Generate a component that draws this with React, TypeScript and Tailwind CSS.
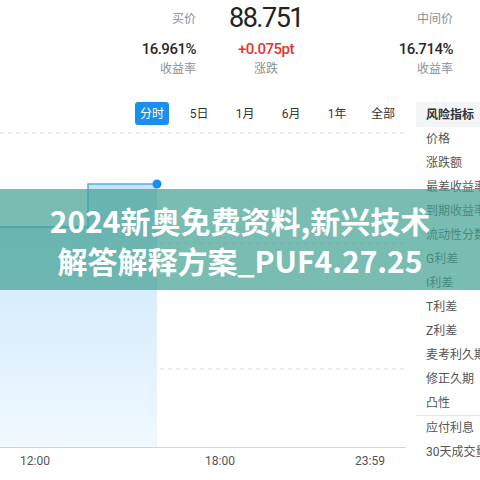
const items = [
  '价格',
  '涨跌额',
  '最差收益率',
  '到期收益率',
  '流动性分数',
  'G利差',
  'I利差',
  'T利差',
  'Z利差',
  '麦考利久期',
  '修正久期',
  '凸性',
];

const tabs = ['分时', '5日', '1月', '6月', '1年', '全部'];

function Chart() {
  return (
    <svg width="406" height="316" viewBox="0 0 406 316" className="block">
      <defs>
        <linearGradient id="fill" x1="0" y1="0" x2="0" y2="1">
          <stop offset="0" stopColor="#c6e4fb" />
          <stop offset="1" stopColor="#f0f9ff" />
        </linearGradient>
      </defs>
      {/* y offset: svg top = page y 132 */}
      <line x1="0" y1="1" x2="406" y2="1" stroke="#d8dde3" strokeDasharray="4 4" />
      <line x1="0" y1="111" x2="406" y2="111" stroke="#d8dde3" strokeDasharray="4 4" />
      <line x1="0" y1="237" x2="406" y2="237" stroke="#dde2e7" strokeDasharray="4 4" />
      <path d="M0 95 H88 V52 H157 V315 H0 Z" fill="url(#fill)" />
      <path d="M0 95 H88 V52 H157" fill="none" stroke="#5aa9ec" strokeWidth="1.5" />
      <circle cx="157" cy="52" r="4.5" fill="#1b8ef2" />
      <line x1="0" y1="315.5" x2="406" y2="315.5" stroke="#cfd4d9" />
    </svg>
  );
}

export default function App() {
  return (
    <div
      className="relative w-[480px] h-[480px] overflow-hidden bg-white"
      style={{ fontFamily: 'Roboto, "Noto Sans CJK SC", sans-serif' }}
    >
      {/* header quotes */}
      <div className="flex h-[100px] pt-[4px]">
        <div className="w-[196px] flex flex-col items-end">
          <div className="h-[28px] flex items-end pb-[4px] text-[12px] text-[#8a8f96]">买价</div>
          <div className="mt-[7px] text-[15px] font-medium text-[#2a2a2a] tracking-[-0.5px] leading-[20px]">16.961%</div>
          <div className="mt-[1px] text-[12px] text-[#8a8f96] leading-[18px]">收益率</div>
        </div>
        <div className="w-[140px] flex flex-col items-center">
          <div className="h-[28px] text-[27px] leading-[28px] text-[#222] tracking-[-1.5px]">88.751</div>
          <div className="mt-[7px] text-[15px] font-medium text-[#e8332f] tracking-[-0.5px] leading-[20px]">+0.075pt</div>
          <div className="mt-[1px] text-[12px] text-[#8a8f96] leading-[18px]">涨跌</div>
        </div>
        <div className="w-[117px] flex flex-col items-end">
          <div className="h-[28px] flex items-end pb-[4px] text-[12px] text-[#8a8f96]">中间价</div>
          <div className="mt-[7px] text-[15px] font-medium text-[#2a2a2a] tracking-[-0.5px] leading-[20px]">16.714%</div>
          <div className="mt-[1px] text-[12px] text-[#8a8f96] leading-[18px]">收益率</div>
        </div>
      </div>

      <div className="flex">
        {/* chart column */}
        <div className="w-[406px] flex flex-col">
          <div className="h-[32px] flex items-start pt-[2px] pl-[135px] text-[12px] text-[#333]">
            {tabs.map((t, i) =>
              i === 0 ? (
                <div key={t} className="w-[35px] h-[23px] mr-[7px] rounded-[3px] bg-[#1a8ff0] text-white flex items-center justify-center">
                  {t}
                </div>
              ) : (
                <div key={t} className="w-[47px] h-[23px] flex items-center justify-center">
                  {t}
                </div>
              )
            )}
          </div>
          <Chart />
          <div className="relative h-[30px] text-[12px] text-[#555]">
            <span className="absolute left-[20px] top-[4px]">12:00</span>
            <span className="absolute left-[205px] top-[4px]">18:00</span>
            <span className="absolute left-[355px] top-[4px]">23:59</span>
          </div>
        </div>

        {/* indicator list */}
        <div className="ml-[10px] flex-1 flex flex-col text-[12px] text-[#555] whitespace-nowrap overflow-hidden">
          <div className="h-[25px] mt-[2px] bg-[#f4f5f7] pl-[10px] flex items-center font-bold text-[#333]">风险指标</div>
          {items.map((t) => (
            <div key={t} className="h-[24px] pl-[10px] flex items-center">
              {t}
            </div>
          ))}
          <div className="h-px bg-[#e3e6ea]" />
          <div className="h-[24px] pl-[10px] flex items-center">应付利息</div>
          <div className="h-[24px] pl-[10px] flex items-center">30天成交量</div>
        </div>
      </div>

      {/* watermark banner */}
      <div className="absolute left-0 right-0 top-[189px] h-[101px] bg-[rgba(64,160,145,0.7)] flex flex-col items-center justify-center text-white font-bold text-[30px] leading-[40px]" style={{ fontFamily: '"Noto Sans CJK SC", sans-serif' }}>
        <div>2024新奥免费资料,新兴技术</div>
        <div>解答解释方案_PUF4.27.25</div>
      </div>
    </div>
  );
}
